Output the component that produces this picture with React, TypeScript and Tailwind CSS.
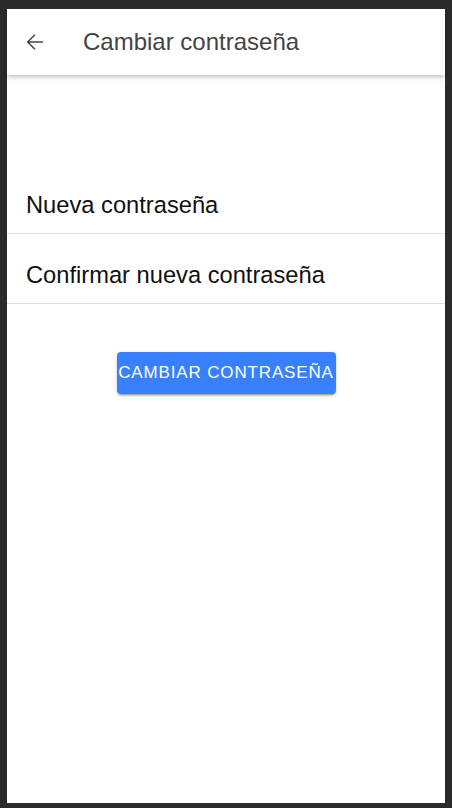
import React from "react";

export default function App() {
  const font = { fontFamily: '"Liberation Sans", Arial, sans-serif' };
  return (
    <div className="h-[808px] w-[452px] bg-[#2a2a2a] pt-[9px] pb-[5px] px-[7px]" style={font}>
      <div className="h-[794px] w-[438px] bg-white flex flex-col">
        <div className="relative z-10 h-[66px] flex items-center bg-white shadow-[0_2px_4px_-1px_rgba(0,0,0,0.2),0_4px_5px_0_rgba(0,0,0,0.08)]">
          <div className="w-[76px] pl-[16px] flex items-center">
            <svg width="24" height="24" viewBox="0 0 512 512" className="text-[#444]">
              <path
                fill="none"
                stroke="currentColor"
                strokeLinecap="square"
                strokeMiterlimit="10"
                strokeWidth="32"
                d="M244 400L100 256l144-144M120 256h292"
              />
            </svg>
          </div>
          <div className="text-[24px] leading-none text-[#444]">Cambiar contraseña</div>
        </div>
        <div className="h-[89px]" />
        <div className="h-[70px] border-b border-[#dedede] flex items-end pl-[19px] pb-[16px]">
          <span className="text-[23.7px] leading-[24px] text-[#111]">Nueva contraseña</span>
        </div>
        <div className="h-[70px] border-b-[1.5px] border-[#dedede] flex items-end pl-[19px] pb-[16px]">
          <span className="text-[23.7px] leading-[24px] text-[#111]">Confirmar nueva contraseña</span>
        </div>
        <div className="flex justify-center pt-[48px]">
          <button className="w-[219px] h-[42px] rounded-[4px] bg-[#3880ff] text-white text-[17px] tracking-[0.05em] uppercase shadow-[0_3px_1px_-2px_rgba(0,0,0,0.2),0_2px_2px_0_rgba(0,0,0,0.14),0_1px_5px_0_rgba(0,0,0,0.12)] flex items-center justify-center whitespace-nowrap">
            Cambiar contraseña
          </button>
        </div>
      </div>
    </div>
  );
}
